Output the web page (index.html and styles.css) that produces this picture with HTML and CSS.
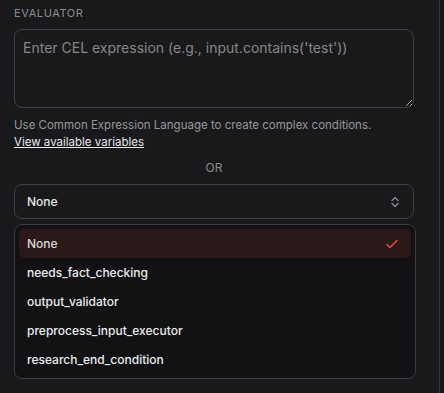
FILE: index.html
```html
<!DOCTYPE html>
<html>
<head>
<meta charset="utf-8">
<link rel="stylesheet" href="styles.css">
</head>
<body>
<div class="page">
  <div class="panel">
    <div class="label">Evaluator</div>
    <textarea class="expr" placeholder="Enter CEL expression (e.g., input.contains('test'))"></textarea>
    <p class="help">Use Common Expression Language to create complex conditions.<br><a class="link" href="#">View available variables</a></p>
    <div class="or">OR</div>
    <div class="select">
      <span>None</span>
      <svg class="chev" width="10" height="14" viewBox="0 0 10 14" fill="none" stroke="#8a8a8e" stroke-width="1.3" stroke-linecap="round" stroke-linejoin="round"><path d="M2 5.5 L5 2.5 L8 5.5"/><path d="M2 8.5 L5 11.5 L8 8.5"/></svg>
    </div>
    <ul class="menu">
      <li class="item active"><span>None</span>
        <svg class="check" width="14" height="12" viewBox="0 0 14 12" fill="none" stroke="#e5483a" stroke-width="1.6" stroke-linecap="round" stroke-linejoin="round"><path d="M2 6.5 L5 9.5 L12 2.5"/></svg>
      </li>
      <li class="item">needs_fact_checking</li>
      <li class="item">output_validator</li>
      <li class="item">preprocess_input_executor</li>
      <li class="item">research_end_condition</li>
    </ul>
  </div>
  <div class="rail"></div>
</div>
</body>
</html>
```
FILE: styles.css
```css
html, body {
  margin: 0;
  padding: 0;
  background: #19191c;
  font-family: Inter, "Noto Sans", sans-serif;
  color: #e6e6e8;
}
.page {
  display: flex;
  width: 444px;
  height: 393px;
}
.panel {
  width: 439px;
  box-sizing: border-box;
  padding: 5px 25px 0 14px;
  display: flex;
  flex-direction: column;
}
.rail {
  width: 1px;
  background: #3a3a3e;
}
.label {
  font-size: 11px;
  letter-spacing: 0.6px;
  text-transform: uppercase;
  color: #8c8c90;
  line-height: 16px;
}
.expr {
  margin-top: 8px;
  height: 79px;
  box-sizing: border-box;
  width: 400px;
  background: transparent;
  border: 1px solid #404044;
  border-radius: 8px;
  padding: 9px 8px;
  font-family: Inter, sans-serif;
  font-size: 14px;
  color: #e6e6e8;
  resize: vertical;
  outline: none;
}
.expr::placeholder {
  color: #86868a;
}
.help {
  margin: 9px 0 0;
  font-size: 11.5px;
  line-height: 17px;
  color: #97979b;
}
.link {
  color: #e8e8ea;
  text-decoration: underline;
}
.or {
  margin-top: 9px;
  text-align: center;
  font-size: 12px;
  color: #8c8c90;
  line-height: 16px;
  width: 400px;
}
.select {
  margin-top: 8px;
  width: 400px;
  height: 35px;
  box-sizing: border-box;
  border: 1px solid #404044;
  border-radius: 8px;
  display: flex;
  align-items: center;
  justify-content: space-between;
  padding: 0 13px 0 12px;
  font-size: 12px;
  font-weight: 500;
  color: #e6e6e8;
}
.menu {
  list-style: none;
  margin: 5px 0 0;
  width: 402px;
  box-sizing: border-box;
  border: 1px solid #3c3c40;
  border-radius: 8px;
  background: #121215;
  padding: 4px 4px;
}
.item {
  height: 29px;
  display: flex;
  align-items: center;
  justify-content: space-between;
  padding: 0 12px 0 8px;
  font-size: 12px;
  font-weight: 500;
  color: #ececee;
  border-radius: 6px;
}
.item.active {
  background: #2b1819;
  color: #d8d8da;
}
```
